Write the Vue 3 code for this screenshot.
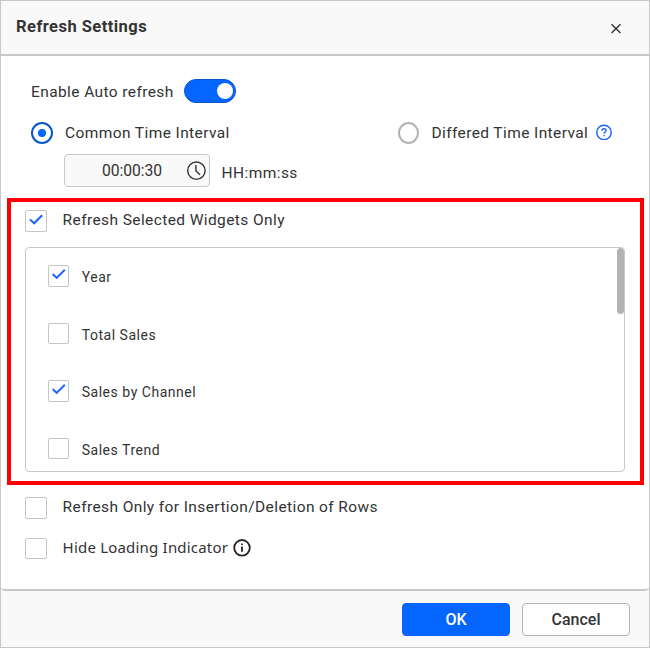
<script setup>
import { ref, reactive } from 'vue'

const autoRefresh = ref(true)
const mode = ref('common')
const interval = ref('00:00:30')
const selectedOnly = ref(true)
const rowsOnly = ref(false)
const hideLoading = ref(false)

const widgets = reactive([
  { name: 'Year', checked: true },
  { name: 'Total Sales', checked: false },
  { name: 'Sales by Channel', checked: true },
  { name: 'Sales Trend', checked: false },
])
</script>

<template>
  <div class="dialog">
    <header class="header">
      <h1 class="title">Refresh Settings</h1>
      <svg class="close" viewBox="0 0 12 12" width="12" height="12">
        <path d="M1.6 1.2 10.4 10M10.4 1.2 1.6 10" />
      </svg>
    </header>

    <main class="body">
      <div class="row auto">
        <span class="label enable">Enable Auto refresh</span>
        <div class="toggle" :class="{ on: autoRefresh }" @click="autoRefresh = !autoRefresh">
          <span class="knob"></span>
        </div>
      </div>

      <div class="row modes">
        <div class="option common" @click="mode = 'common'">
          <span class="radio" :class="{ on: mode === 'common' }"></span>
          <span class="label">Common Time Interval</span>
        </div>
        <div class="option differed" @click="mode = 'differed'">
          <span class="radio" :class="{ on: mode === 'differed' }"></span>
          <span class="label">Differed Time Interval</span>
          <svg class="help" viewBox="0 0 16 16" width="16" height="16">
            <circle cx="8" cy="8.4" r="7.2" />
            <path d="M5.9 6.8C5.9 5.4 6.8 4.7 8 4.7S10.1 5.5 10.1 6.6C10.1 8 8.1 8.1 8.1 9.7M8.1 11V12.3" />
          </svg>
        </div>
      </div>

      <div class="row time">
        <div class="time-box">
          <span class="time-value">{{ interval }}</span>
          <svg class="clock" viewBox="0 0 20 20" width="20" height="20">
            <circle cx="10.4" cy="9.7" r="8.7" />
            <path d="M9.9 4.1V9.9L14 13.7" />
          </svg>
        </div>
        <span class="label format">HH:mm:ss</span>
      </div>

      <section class="highlight">
        <div class="check-row" @click="selectedOnly = !selectedOnly">
          <span class="check">
            <svg v-if="selectedOnly" viewBox="0 0 14 11" width="14" height="11"><path d="M1 5.4 5.1 9.3 13.2 1.2" /></svg>
          </span>
          <span class="label">Refresh Selected Widgets Only</span>
        </div>
        <div class="list">
          <div v-for="w in widgets" :key="w.name" class="item" @click="w.checked = !w.checked">
            <span class="check small">
              <svg v-if="w.checked" viewBox="0 0 14 11" width="14" height="11"><path d="M0.6 5 4.7 8.9 12.8 0.8" /></svg>
            </span>
            <span class="item-text">{{ w.name }}</span>
          </div>
          <span class="thumb"></span>
        </div>
      </section>

      <div class="check-row rows" @click="rowsOnly = !rowsOnly">
        <span class="check">
          <svg v-if="rowsOnly" viewBox="0 0 14 11" width="14" height="11"><path d="M1 5.4 5.1 9.3 13.2 1.2" /></svg>
        </span>
        <span class="label">Refresh Only for Insertion/Deletion of Rows</span>
      </div>
      <div class="check-row hide" @click="hideLoading = !hideLoading">
        <span class="check short">
          <svg v-if="hideLoading" viewBox="0 0 14 11" width="14" height="11"><path d="M1 5.4 5.1 9.3 13.2 1.2" /></svg>
        </span>
        <span class="label hide-text">Hide Loading Indicator</span>
        <svg class="info" viewBox="0 0 18 18" width="18" height="18">
          <circle cx="9" cy="8.8" r="7.8" />
          <path d="M9 7.4V12.8M9 4.5V6.1" />
        </svg>
      </div>
    </main>

    <footer class="footer">
      <button class="btn primary">OK</button>
      <button class="btn">Cancel</button>
    </footer>
  </div>
</template>

<style>
body {
  background: #f9f9f9;
}
</style>

<style scoped>
.dialog {
  box-sizing: border-box;
  width: 650px;
  height: 648px;
  border: 1px solid #c8c8c8;
  background: #f9f9f9;
  color: #333;
  font-family: Roboto, "Liberation Sans", sans-serif;
  display: flex;
  flex-direction: column;
  overflow: hidden;
}
.header {
  height: 53px;
  flex: none;
  display: flex;
  justify-content: space-between;
  padding: 0 27px 0 15px;
  border-bottom: 2px solid #c8c8c8;
}
.title {
  margin: 16px 0 0;
  font-size: 16.5px;
  line-height: 20px;
  font-weight: 700;
  letter-spacing: 0.46px;
}
.close {
  margin-top: 22px;
}
.close path {
  fill: none;
  stroke: #333;
  stroke-width: 1.4;
}
.body {
  flex: 1;
  background: #fff;
  border-bottom: 2px solid #c8c8c8;
  border-radius: 0 0 4px 4px;
}
.label {
  font-size: 15.5px;
  line-height: 20px;
  letter-spacing: 0.4px;
  white-space: nowrap;
}
.row {
  display: flex;
}
.auto {
  height: 24px;
  margin: 23px 0 0 30px;
}
.enable {
  width: 153px;
  padding-top: 3px;
}
.toggle {
  box-sizing: border-box;
  width: 52px;
  height: 24px;
  padding: 4px;
  border-radius: 12px;
  background: #aaa;
}
.toggle.on {
  display: flex;
  justify-content: flex-end;
  background: #0565ff;
  border: 1px solid #0b55cc;
  padding: 3px 2.5px;
}
.knob {
  display: block;
  width: 16px;
  height: 16px;
  border-radius: 50%;
  background: #fff;
}
.modes {
  height: 22px;
  margin: 19px 0 0 30px;
}
.option {
  display: flex;
}
.common {
  width: 367px;
}
.option .label {
  padding-top: 1px;
}
.radio {
  box-sizing: border-box;
  width: 22px;
  height: 22px;
  margin-right: 12px;
  border: 2px solid #b3b3b3;
  border-radius: 50%;
  display: flex;
  align-items: center;
  justify-content: center;
  flex: none;
}
.differed .radio {
  width: 21px;
  margin-right: 12.4px;
}
.radio.on {
  border-color: #0b55cc;
}
.radio.on::after {
  content: "";
  width: 8px;
  height: 8px;
  border-radius: 50%;
  background: #0565ff;
}
.help {
  margin: 2px 0 0 7.6px;
}
.help circle,
.help path {
  fill: none;
  stroke: #1c62ff;
  stroke-width: 1.4;
}
.time {
  height: 33px;
  margin: 10px 0 0 63px;
}
.time-box {
  box-sizing: border-box;
  width: 146px;
  height: 33px;
  border: 1px solid #c8c8c8;
  border-radius: 4px;
  background: #f9f9f9;
  display: flex;
  justify-content: flex-end;
}
.time-value {
  width: 84px;
  padding-top: 6px;
  font-size: 15.7px;
  line-height: 20px;
  letter-spacing: -0.05px;
}
.clock {
  margin: 6px 3px 0 0;
}
.clock circle,
.clock path {
  fill: none;
  stroke: #333;
  stroke-width: 1.4;
}
.format {
  padding: 9px 0 0 11.5px;
  letter-spacing: 0.43px;
}
.highlight {
  box-sizing: border-box;
  width: 637px;
  height: 287px;
  margin: 11px 0 0 6px;
  border: 4px solid #f00;
  padding: 8px 14px 0;
}
.check-row {
  display: flex;
  height: 22px;
}
.check-row .label {
  margin-left: 15.6px;
}
.check {
  box-sizing: border-box;
  width: 22px;
  height: 22px;
  border: 1px solid #c4c4c4;
  border-radius: 2px;
  flex: none;
  display: flex;
  justify-content: center;
  padding-top: 3px;
}
.check.short {
  height: 21px;
}
.check.small {
  width: 21px;
}
.check svg path {
  fill: none;
  stroke: #1c62ff;
  stroke-width: 2;
}
.list {
  position: relative;
  box-sizing: border-box;
  width: 600px;
  height: 225px;
  margin-top: 15px;
  border: 1px solid #c8c8c8;
  border-radius: 4px;
  padding: 17px 22px 0;
  overflow: hidden;
}
.item {
  display: flex;
  height: 57.6px;
}
.item:nth-child(even) .check {
  height: 21px;
}
.item-text {
  margin: 2px 0 0 12.7px;
  font-size: 14px;
  line-height: 20px;
  letter-spacing: 0.53px;
}
.thumb {
  position: absolute;
  top: 0;
  right: 0;
  width: 7px;
  height: 66px;
  border-radius: 4px;
  background: #b3b3b3;
}
.rows {
  margin: 12px 0 0 24px;
}
.hide {
  margin: 19px 0 0 24px;
}
.check-row .hide-text {
  width: 164.4px;
  height: 20px;
  margin: -1px 0 0 15.6px;
  font-family: "Noto Sans", Roboto, sans-serif;
  font-size: 15px;
  letter-spacing: 0.2px;
}
.info {
  margin: 1px 0 0 6px;
}
.info circle,
.info path {
  fill: none;
  stroke: #222;
  stroke-width: 1.8;
}
.footer {
  height: 56px;
  flex: none;
  box-sizing: border-box;
  display: flex;
  justify-content: flex-end;
  gap: 12px;
  padding: 12px 19px 0 0;
}
.btn {
  box-sizing: border-box;
  width: 108px;
  height: 33px;
  padding: 0;
  border: 1px solid #b3b3b3;
  border-radius: 4px;
  background: #fff;
  color: #333;
  font: 500 16px/20px Roboto, "Liberation Sans", sans-serif;
}
.btn.primary {
  border-color: #0565ff;
  background: #0565ff;
  color: #fff;
}
</style>
